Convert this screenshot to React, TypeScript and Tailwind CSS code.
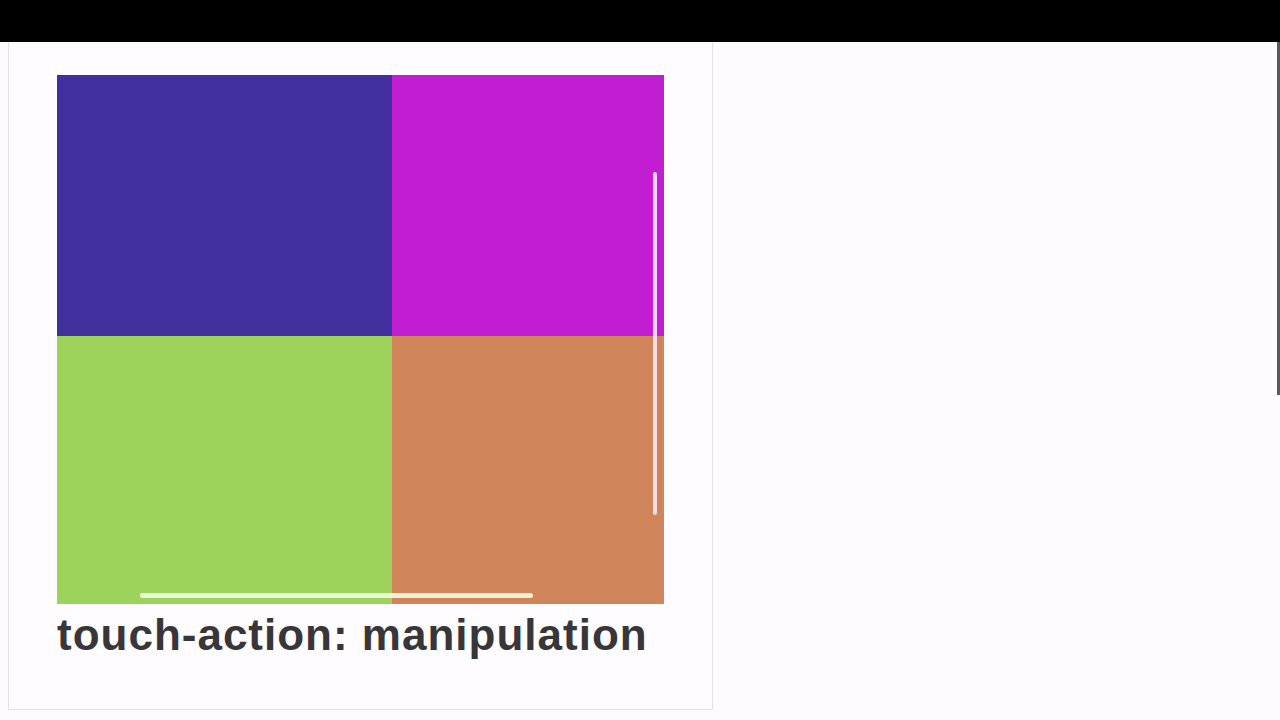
export default function App() {
  return (
    <div className="relative h-[720px] w-[1280px] overflow-hidden bg-[#fdfbfd]">
      <div className="h-[42px] bg-black" />
      <div className="flex">
        <div className="ml-[8px] h-[668px] w-[705px] border border-t-0 border-[#e4e2e4] bg-[#fefcfe]">
          <div className="relative ml-[48px] mt-[33px] grid w-[607px] grid-cols-[335px_272px] grid-rows-[261px_268px]">
            <div className="bg-[#422f9e]" />
            <div className="bg-[#c11ed2]" />
            <div className="bg-[#9dd35a]" />
            <div className="bg-[#cf845a]" />
            <div className="absolute left-[596px] top-[97px] h-[343px] w-[4px] rounded-full bg-[#fbe6f6]/90" />
            <div className="absolute left-[83px] top-[518px] h-[5px] w-[393px] rounded-full bg-[#f3ffe0]/90" />
          </div>
          <div
            className="ml-[48px] mt-[3px] text-[44px] font-bold leading-[56px] tracking-[1px] text-[#383638]"
            style={{ fontFamily: '"Liberation Sans", Arial, sans-serif' }}
          >
            touch-action: manipulation
          </div>
        </div>
      </div>
      <div className="absolute right-0 top-[42px] h-[353px] w-[3px] bg-[#5a585a]" />
    </div>
  );
}
